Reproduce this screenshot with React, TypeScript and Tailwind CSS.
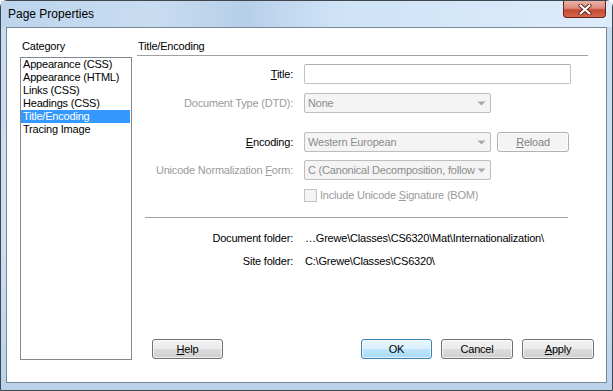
import React from "react";

const Arrow = () => (
  <svg width="9" height="5" viewBox="0 0 9 5" className="shrink-0 ml-[2px]">
    <path d="M0.5 0.5 L8.5 0.5 L4.5 4.5 Z" fill="#a8a8a8" />
  </svg>
);

function Select({ text, w }: { text: string; w: string }) {
  return (
    <div
      className={`${w} h-[20px] rounded-[2px] border border-[#bdbdbd] bg-[#f4f4f4] flex items-center pl-[3px] pr-[4px] text-[#8c8c8c]`}
    >
      <span className="flex-1 whitespace-nowrap">{text}</span>
      <Arrow />
    </div>
  );
}

function Btn({
  children,
  w,
  variant = "normal",
}: {
  children: React.ReactNode;
  w: string;
  variant?: "normal" | "default" | "disabled";
}) {
  const cls =
    variant === "default"
      ? "border-[#3c7fb1] bg-[linear-gradient(180deg,#eaf6fd_0%,#d9f0fc_50%,#bee6fd_51%,#a7d9f5_100%)] text-black"
      : variant === "disabled"
      ? "border-[#adb2b5] bg-[#f4f4f4] text-[#838383]"
      : "border-[#707070] bg-[linear-gradient(180deg,#f2f2f2_0%,#ebebeb_50%,#dddddd_51%,#cfcfcf_100%)] text-black";
  return (
    <div
      className={`${w} h-[20px] rounded-[3px] border ${cls} flex items-center justify-center shadow-[inset_0_0_0_1px_rgba(255,255,255,0.7)]`}
    >
      {children}
    </div>
  );
}

const U = ({ c }: { c: string }) => <span className="underline underline-offset-[1px]">{c}</span>;

export default function App() {
  const items = [
    "Appearance (CSS)",
    "Appearance (HTML)",
    "Links (CSS)",
    "Headings (CSS)",
    "Title/Encoding",
    "Tracing Image",
  ];
  return (
    <div className="w-[613px] h-[391px] overflow-hidden font-['Liberation_Sans',Arial,sans-serif] text-[11px] tracking-[-0.2px] leading-[13px] text-black">
      <div className="w-[613px] h-[391px] rounded-t-[7px] border border-[#3e4750] bg-[linear-gradient(180deg,#c6dcf1_0%,#cde0f3_60%,#b9d2ea_100%)] flex flex-col">
        {/* Title bar */}
        <div className="h-[26px] flex items-start justify-between bg-[linear-gradient(90deg,#bcd5ed_0%,#c8dcf1_25%,#b6cfe8_40%,#cfe3f7_55%,#d6e8f9_80%,#deecfa_100%)]">
          <div className="pl-[7px] pt-[6px] text-[12px] leading-[15px] tracking-normal text-black">
            Page Properties
          </div>
          <div className="mr-[6px] w-[43px] h-[17px] rounded-b-[4px] border border-t-0 border-[#6b2116] bg-[linear-gradient(180deg,#e9b1a6_0%,#dd8b7c_45%,#c74a33_55%,#d5654c_100%)] flex items-center justify-center">
            <svg width="14" height="11" viewBox="0 0 14 11">
              <path d="M2.5 1.5 L11.5 9.5 M11.5 1.5 L2.5 9.5" stroke="#5a2118" strokeWidth="4" strokeLinecap="round" />
              <path d="M2.5 1.5 L11.5 9.5 M11.5 1.5 L2.5 9.5" stroke="#ffffff" strokeWidth="2.2" strokeLinecap="round" />
            </svg>
          </div>
        </div>
        {/* Client area */}
        <div className="ml-[5px] w-[601px] h-[356px] border border-[#7a8796] bg-white flex pt-[12px] pl-[13px]">
          {/* Left */}
          <div className="flex flex-col w-[112px]">
            <div className="h-[13px] pl-[2px]">Category</div>
            <div className="mt-[4px] h-[303px] border border-[#828790] bg-white">
              {items.map((it) => (
                <div
                  key={it}
                  className={`h-[13px] pl-[2px] mr-[1px] whitespace-nowrap ${
                    it === "Title/Encoding" ? "bg-[#3399ff] text-white" : ""
                  }`}
                >
                  {it}
                </div>
              ))}
            </div>
          </div>
          {/* Right */}
          <div className="ml-[5px] flex-1 flex flex-col h-[320px]">
            <div className="w-[451px] h-[16px] border-b border-[#a0a0a0] pl-[1px]">Title/Encoding</div>

            <div className="mt-[8px] flex items-center h-[20px]">
              <div className="w-[156px] text-right">
                <U c="T" />itle:
              </div>
              <div className="ml-[11px] w-[267px] h-[20px] rounded-[2px] border border-[#c2c2c2] border-t-[#abadb3] bg-white" />
            </div>

            <div className="mt-[9px] flex items-center h-[20px]">
              <div className="w-[156px] text-right text-[#9a9a9a]">Document Type (DTD):</div>
              <div className="ml-[11px]">
                <Select text="None" w="w-[187px]" />
              </div>
            </div>

            <div className="mt-[19px] flex items-center h-[20px]">
              <div className="w-[156px] text-right">
                <U c="E" />ncoding:
              </div>
              <div className="ml-[11px]">
                <Select text="Western European" w="w-[187px]" />
              </div>
              <div className="ml-[6px]">
                <Btn w="w-[72px]" variant="disabled">
                  <span>
                    <U c="R" />eload
                  </span>
                </Btn>
              </div>
            </div>

            <div className="mt-[8px] flex items-center h-[20px]">
              <div className="w-[156px] text-right text-[#9a9a9a] whitespace-nowrap">
                Unicode Normalization <U c="F" />orm:
              </div>
              <div className="ml-[11px]">
                <Select text="C (Canonical Decomposition, follow" w="w-[187px]" />
              </div>
            </div>

            <div className="mt-[8px] flex items-center h-[14px] pl-[167px]">
              <div className="w-[13px] h-[13px] border border-[#c4c4c4] bg-[#f4f4f4]" />
              <div className="ml-[3px] text-[#9a9a9a]">
                Include Unicode <U c="S" />ignature (BOM)
              </div>
            </div>

            <div className="mt-[15px] ml-[8px] w-[423px] h-px bg-[#a0a0a0]" />

            <div className="mt-[14px] flex items-center h-[13px]">
              <div className="w-[156px] text-right">Document folder:</div>
              <div className="ml-[12px] whitespace-nowrap">…Grewe\Classes\CS6320\Mat\Internationalization\</div>
            </div>
            <div className="mt-[10px] flex items-center h-[13px]">
              <div className="w-[156px] text-right">Site folder:</div>
              <div className="ml-[12px] whitespace-nowrap">C:\Grewe\Classes\CS6320\</div>
            </div>

            <div className="mt-auto mb-[1px] flex items-center pr-[12px]">
              <div className="ml-[15px]">
                <Btn w="w-[71px]">
                  <span>
                    <U c="H" />elp
                  </span>
                </Btn>
              </div>
              <div className="flex-1" />
              <div className="flex gap-[9px]">
                <Btn w="w-[71px]" variant="default">OK</Btn>
                <Btn w="w-[72px]">Cancel</Btn>
                <Btn w="w-[72px]">
                  <span>
                    <U c="A" />pply
                  </span>
                </Btn>
              </div>
            </div>
          </div>
        </div>
      </div>
    </div>
  );
}
